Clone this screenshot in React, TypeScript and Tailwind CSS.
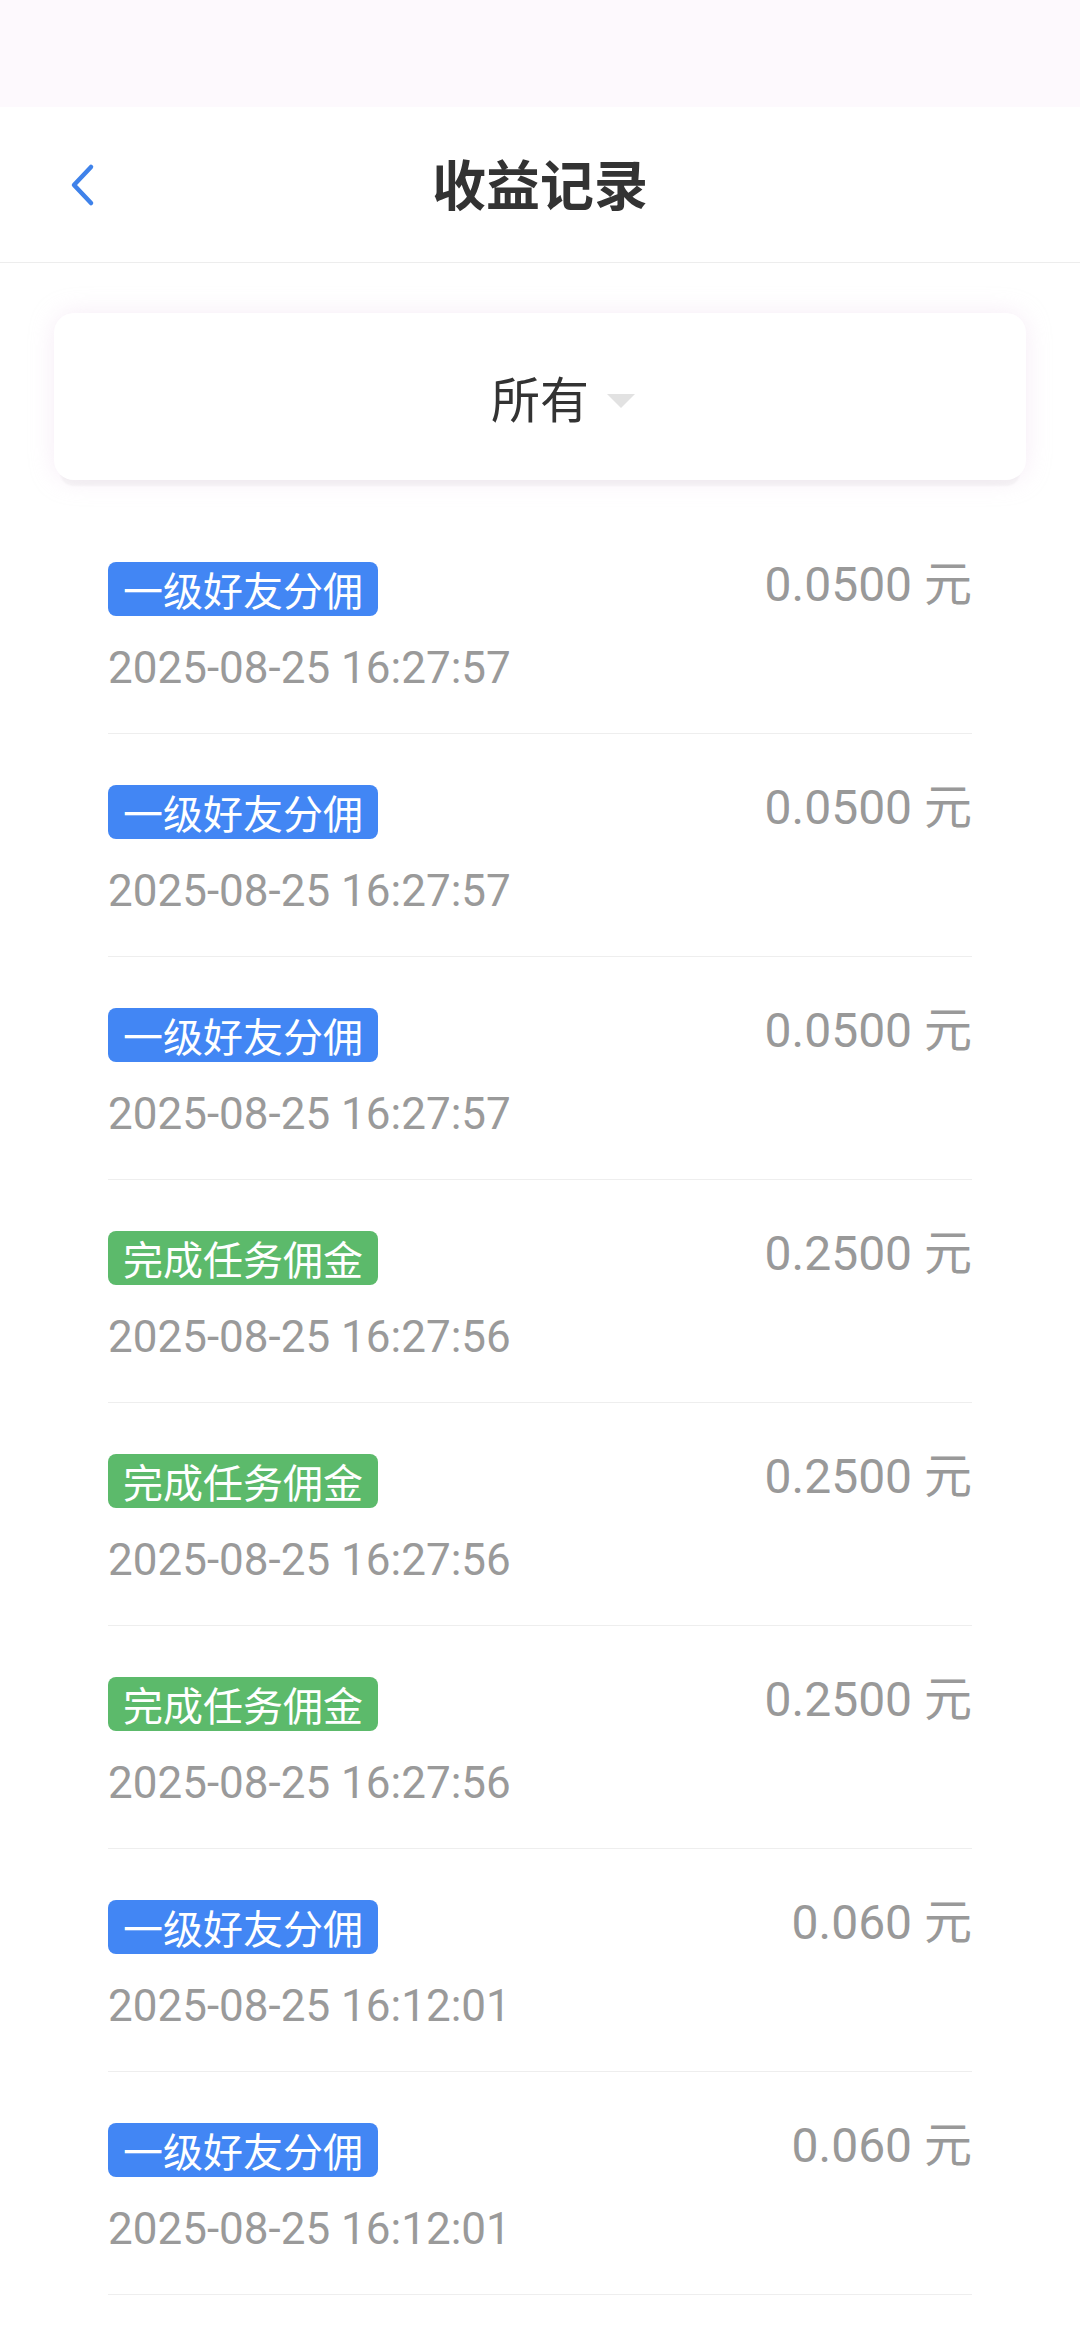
import React from "react";

type Row = { tag: string; kind: "blue" | "green"; amount: string; time: string };

const rows: Row[] = [
  { tag: "一级好友分佣", kind: "blue", amount: "0.0500 元", time: "2025-08-25 16:27:57" },
  { tag: "一级好友分佣", kind: "blue", amount: "0.0500 元", time: "2025-08-25 16:27:57" },
  { tag: "一级好友分佣", kind: "blue", amount: "0.0500 元", time: "2025-08-25 16:27:57" },
  { tag: "完成任务佣金", kind: "green", amount: "0.2500 元", time: "2025-08-25 16:27:56" },
  { tag: "完成任务佣金", kind: "green", amount: "0.2500 元", time: "2025-08-25 16:27:56" },
  { tag: "完成任务佣金", kind: "green", amount: "0.2500 元", time: "2025-08-25 16:27:56" },
  { tag: "一级好友分佣", kind: "blue", amount: "0.060 元", time: "2025-08-25 16:12:01" },
  { tag: "一级好友分佣", kind: "blue", amount: "0.060 元", time: "2025-08-25 16:12:01" },
];

const font = { fontFamily: 'Roboto, "Noto Sans CJK SC", sans-serif' };
const cjk = { fontFamily: '"Noto Sans CJK SC", sans-serif' };

export default function App() {
  return (
    <div className="w-[1080px] min-h-[2340px] bg-white overflow-hidden" style={font}>
      <div className="h-[107px] bg-[#fdf9fd]" />
      <div className="h-[156px] border-b border-[#ededed] grid grid-cols-[1fr_auto_1fr] items-center px-[68px]">
        <div className="flex items-center">
          <svg width="28" height="44" viewBox="0 0 28 44" fill="none">
            <path d="M23 4 L6 22 L23 40" stroke="#3f82ea" strokeWidth="4.5" strokeLinecap="round" strokeLinejoin="round" />
          </svg>
        </div>
        <div className="text-[54px] font-bold text-[#333333] leading-none -mt-[4px]" style={cjk}>
          收益记录
        </div>
        <div />
      </div>
      <div className="px-[54px] pt-[50px]">
        <div className="h-[167px] rounded-[20px] bg-white flex items-center justify-center shadow-[0_12px_2px_-6px_rgba(0,0,0,0.035),0_0_24px_rgba(230,200,230,0.35)]">
          <span className="relative text-[49px] text-[#333333] leading-none" style={cjk}>
            所有
            <svg width="28" height="14" viewBox="0 0 28 14" className="absolute left-[calc(100%+18px)] top-[22px]">
              <path d="M0 0 L28 0 L14 14 Z" fill="#e2e2e2" />
            </svg>
          </span>
        </div>
      </div>
      <div className="mx-[108px] mt-[31px]">
        {rows.map((r, i) => (
          <div key={i} className="pt-[51px] pb-[35px] border-b border-[#eeeeee] flex justify-between items-start">
            <div className="flex flex-col items-start">
              <div
                className={
                  "h-[54px] px-[15px] rounded-[8px] text-white text-[40px] leading-[54px] " +
                  (r.kind === "blue" ? "bg-[#4286f4]" : "bg-[#5cba6b]")
                }
                style={cjk}
              >
                {r.tag}
              </div>
              <div className="mt-[22px] text-[44px] leading-[60px] text-[#9a9a9a]">{r.time}</div>
            </div>
            <div className="text-[48px] leading-[46px] text-[#999999] whitespace-nowrap">{r.amount}</div>
          </div>
        ))}
      </div>
    </div>
  );
}
